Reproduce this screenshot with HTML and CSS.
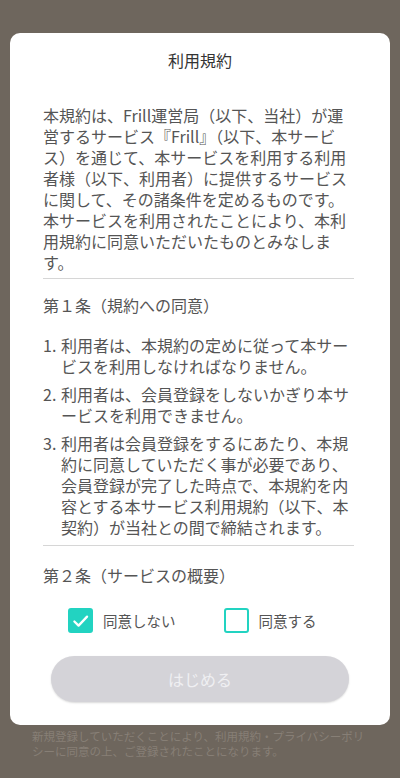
FILE: index.html
```html
<!DOCTYPE html>
<html lang="ja">
<head>
  <meta charset="UTF-8" />
  <meta name="viewport" content="width=device-width, initial-scale=1.0" />
  <title>利用規約</title>
  <link rel="stylesheet" href="styles.css">
</head>
<body>
  <div class="modal">
    <h1>利用規約</h1>

    <div class="terms">
      <p>本規約は、Frill運営局（以下、当社）が運営するサービス『Frill』（以下、本サービス）を通じて、本サービスを利用する利用者様（以下、利用者）に提供するサービスに関して、その諸条件を定めるものです。本サービスを利用されたことにより、本利用規約に同意いただいたものとみなします。</p>

      <h2>第１条（規約への同意）</h2>
      <ol>
        <li><span class="num">1.</span><span>利用者は、本規約の定めに従って本サービスを利用しなければなりません。</span></li>
        <li><span class="num">2.</span><span>利用者は、会員登録をしないかぎり本サービスを利用できません。</span></li>
        <li><span class="num">3.</span><span>利用者は会員登録をするにあたり、本規約に同意していただく事が必要であり、会員登録が完了した時点で、本規約を内容とする本サービス利用規約（以下、本契約）が当社との間で締結されます。</span></li>
      </ol>

      <h2>第２条（サービスの概要）</h2>
    </div>

    <div class="agree">
      <div class="choice">
        <span class="box checked">
          <svg viewBox="0 0 24 24" width="22" height="22"><path d="M5 12.5l4.8 4.8L19.5 7" fill="none" stroke="#fff" stroke-width="2.6" stroke-linecap="round" stroke-linejoin="round"/></svg>
        </span>
        <span class="label">同意しない</span>
      </div>
      <div class="choice">
        <span class="box"></span>
        <span class="label">同意する</span>
      </div>
    </div>

    <button class="start" disabled>はじめる</button>
  </div>

  <p class="note">新規登録していただくことにより、利用規約・プライバシーポリシーに同意の上、ご登録されたことになります。</p>
</body>
</html>
```

FILE: styles.css
```css
body {
  margin: 0;
  background: #6e665d;
  font-family: "Noto Sans CJK JP", "Noto Sans", sans-serif;
  color: #555;
}
.modal {
  margin: 33px 10px 0;
  background: #fff;
  border-radius: 10px;
  padding: 16px 0 23px;
}
h1 {
  margin: 0;
  font-size: 16px;
  font-weight: 400;
  line-height: 22px;
  text-align: center;
  color: #333;
}
.terms {
  height: 522px;
  overflow: hidden;
  padding: 33.5px 36px 0 33px;
  box-sizing: border-box;
  font-size: 16px;
  line-height: 21px;
}
.terms p {
  margin: 0;
  padding-bottom: 5px;
  border-bottom: 1px solid #d6d6d6;
}
h2 {
  margin: 15.5px 0 18.5px;
  font-size: 16px;
  font-weight: 400;
  line-height: 22px;
}
ol + h2 {
  margin-top: 17.5px;
}
ol {
  list-style: none;
  margin: 0;
  padding: 0 0 7.5px;
  border-bottom: 1px solid #d6d6d6;
}
ol li {
  display: flex;
  margin-bottom: 7px;
}
ol li:last-child {
  margin-bottom: 0;
}
.num {
  flex: 0 0 18px;
}
.agree {
  display: flex;
  gap: 48px;
  padding-left: 58px;
  margin-top: 15px;
  height: 25px;
}
.choice {
  display: flex;
  align-items: center;
  gap: 10px;
}
.label {
  font-size: 14.5px;
  line-height: 25px;
  color: #555;
}
.box {
  flex: 0 0 25px;
  width: 25px;
  height: 25px;
  box-sizing: border-box;
  border: 2.5px solid #22d3c1;
  border-radius: 3px;
  display: flex;
  align-items: center;
  justify-content: center;
}
.box.checked {
  background: #22d3c1;
}
.start {
  display: block;
  width: 298px;
  height: 46px;
  margin: 23px auto 0;
  border: none;
  border-radius: 23px;
  background: #d4d3d8;
  box-shadow: 0 1px 2px rgba(0, 0, 0, 0.15);
  color: #efeff2;
  font-family: inherit;
  font-size: 16px;
}
.note {
  margin: 3.5px 0 0;
  padding: 0 32px;
  font-size: 11.5px;
  line-height: 15px;
  color: #877f76;
}
```
